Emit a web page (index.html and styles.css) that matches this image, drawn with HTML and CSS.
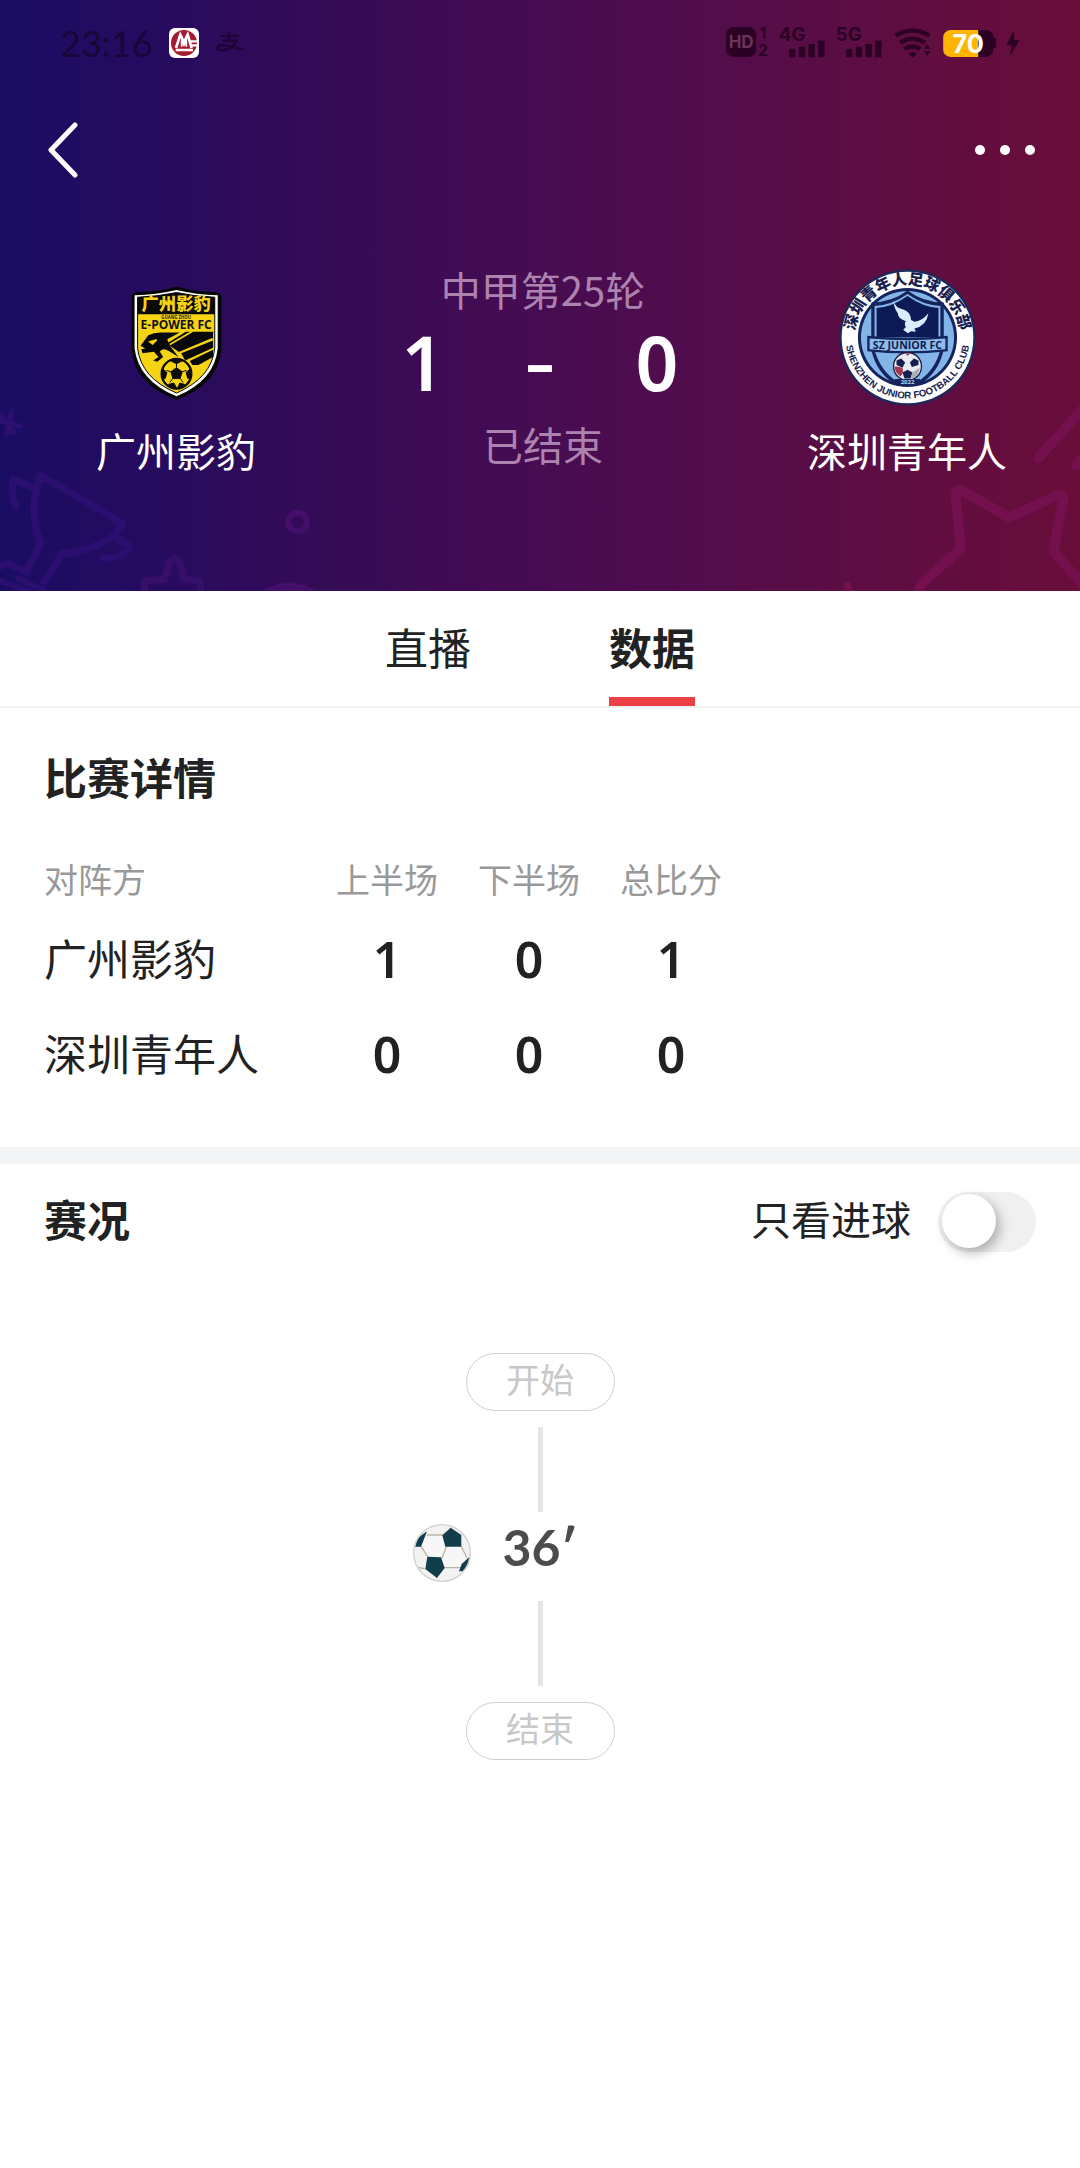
FILE: index.html
```html
<!DOCTYPE html>
<html lang="zh-CN">
<head>
<meta charset="utf-8">
<meta name="viewport" content="width=device-width, initial-scale=1">
<title>广州影豹 1-0 深圳青年人</title>
<link rel="stylesheet" href="styles.css">
</head>
<body>
<header class="hero">
  <svg class="art art-left" viewBox="0 0 1080 603" aria-hidden="true">
    <g fill="none" stroke-width="22" stroke-linejoin="round" stroke-linecap="round">
      <g stroke="#2a0f70">
        <path d="M35 68 L18 135 M-5 92 L60 108 M2 74 L42 128" stroke-width="16"/>
        <path d="M122 256 L368 400 C350 445 270 485 185 492 L133 576 M122 256 C95 330 95 390 122 462 L78 546 L22 520 L-10 532"/>
        <path d="M105 296 L42 268 C32 300 36 325 48 350 M338 436 L388 466 C380 495 350 506 310 504"/>
        <path d="M-5 570 L90 606 M55 566 L130 600" stroke-width="18"/>
      </g>
      <path stroke="#350f6a" d="M432 603 L436 572 L492 568 C508 540 502 508 522 506 C545 506 542 540 552 568 L600 572 L602 603"/>
      <circle stroke="#430f6a" cx="893" cy="396" r="28" stroke-width="18"/>
    </g>
    <path fill="#430f68" d="M785 603 Q870 550 950 603Z"/>
  </svg>
  <svg class="art art-right" viewBox="0 0 900 603" aria-hidden="true">
    <g fill="none" stroke="#75104f" stroke-width="30" stroke-linejoin="round" stroke-linecap="round">
      <path d="M418 600 C420 580 440 568 542 476 L527 310 Q530 296 545 302 L687 382 L835 315 Q852 312 850 325 L820 485 L915 590"/>
      <path d="M776 203 L905 60 M888 226 L915 200"/>
      <path d="M202 586 L212 610" stroke-width="22"/>
    </g>
  </svg>

  <div class="status-bar">
    <div class="status-left">
      <span class="clock">23:16</span>
      <svg class="bank" viewBox="0 0 90 90" aria-hidden="true">
        <rect width="90" height="90" rx="18" fill="#fff"/>
        <circle cx="45" cy="45" r="39" fill="#a51c30"/>
        <path d="M21 60 L34 20 L45 42 L56 20 L68 60" fill="none" stroke="#fff" stroke-width="8"/>
        <path d="M38 56 V40 L45 52 L52 40 V56" fill="none" stroke="#fff" stroke-width="5"/>
        <path d="M20 66 H72 M64 40 H86 M68 52 H84" stroke="#fff" stroke-width="7"/>
      </svg>
      <svg class="pay" viewBox="0 0 90 66" aria-hidden="true">
        <g fill="none" stroke="#1d0538" stroke-width="8">
          <path d="M12 12 H74 M42 0 V26 M20 27 H66 C58 44 40 58 16 58 C0 57 2 42 18 41 C42 40 58 52 86 55"/>
        </g>
      </svg>
    </div>
    <svg class="status-icons" viewBox="75 75 890 105" aria-hidden="true">
      <g fill="#2b0224">
        <rect x="78" y="81" width="90" height="90" rx="22"/>
        <path d="M268 148 h16 v23 h-16z M297 141 h17 v30 h-17z M326 133 h17 v38 h-17z M355 123 h17 v48 h-17z" stroke="#2b0224" stroke-width="2" stroke-linejoin="round"/>
        <path d="M439 148 h16 v23 h-16z M468 141 h17 v30 h-17z M497 133 h17 v38 h-17z M526 123 h17 v48 h-17z" stroke="#2b0224" stroke-width="2" stroke-linejoin="round"/>
        <path d="M624 162 Q637 150 650 162 L637 173Z M681 132 l10 14 h-20z M681 167 l10 -14 h-20z"/>
        <rect x="729" y="90" width="151" height="81" rx="22"/>
        <rect x="876" y="114" width="12" height="30" rx="4"/>
        <path d="M941 92 L918 136 H934 L930 168 L958 120 H942Z"/>
      </g>
      <g fill="none" stroke="#2b0224" stroke-width="13">
        <path d="M586 107 Q637 77 688 107 M600 128 Q637 104 674 128 M613 147 Q637 132 660 147"/>
      </g>
      <path d="M751 90 H834 V171 H751 A22 22 0 0 1 729 149 V112 A22 22 0 0 1 751 90Z" fill="#ffb400"/>
      <g class="glyphs">
        <text x="123" y="144" font-size="51" text-anchor="middle" fill="#6a3558">HD</text>
        <text x="189" y="116" font-size="46" text-anchor="middle" fill="#2b0224">1</text>
        <text x="189" y="167" font-size="46" text-anchor="middle" fill="#2b0224">2</text>
        <text x="276" y="124" font-size="56" text-anchor="middle" fill="#2b0224">4G</text>
        <text x="446" y="124" font-size="56" text-anchor="middle" fill="#2b0224">5G</text>
        <text x="804" y="158" font-size="76" text-anchor="middle" fill="#fff">70</text>
      </g>
    </svg>
  </div>

  <div class="nav-bar">
    <button class="icon-button" type="button" aria-label="返回">
      <svg class="back-icon" viewBox="0 0 32 56"><path d="M28 3 L4 28 L28 53" fill="none" stroke="#fff" stroke-width="5" stroke-linecap="round" stroke-linejoin="round"/></svg>
    </button>
    <button class="icon-button" type="button" aria-label="更多">
      <svg class="more-icon" viewBox="0 0 60 10"><g fill="#fff"><circle cx="5" cy="5" r="5"/><circle cx="30" cy="5" r="5"/><circle cx="55" cy="5" r="5"/></g></svg>
    </button>
  </div>

  <div class="match">
    <div class="team">
      <svg class="crest" viewBox="84 27 412 412" role="img" aria-label="广州影豹队徽">
        <path d="M290 80 Q345 96 400 96 Q425 96 425 110 V270 Q415 375 290 420 Q165 375 155 270 V110 Q155 96 180 96 Q240 96 290 80Z" fill="#060606"/>
        <path d="M290 90 Q350 104 414 106 V265 Q405 362 290 410 Q175 362 164 265 V106 Q230 104 290 90Z" fill="#fff"/>
        <path d="M290 98 Q350 110 405 112 V265 Q396 354 290 400 Q183 354 173 265 V112 Q230 110 290 98Z" fill="#f6d414" stroke="#060606" stroke-width="3"/>
        <path d="M290 98 Q350 110 405 112 V163 H173 V112 Q230 110 290 98Z" fill="#0a0a0a"/>
        <text class="crest-cn" x="289" y="151" font-size="52" text-anchor="middle" fill="#f6d414">广州影豹</text>
        <text class="crest-en" x="289" y="177" font-size="13" text-anchor="middle" fill="#222">GUANG ZHOU</text>
        <text class="crest-en" x="289" y="206" font-size="36" text-anchor="middle" fill="#111">E-POWER FC</text>
        <path d="M182 258 L205 226 Q225 216 250 218 H300 L262 238 L270 258 L296 292 L268 274 Q246 262 240 276 L250 292 L232 306 L220 302 L236 292 L222 276 L188 280 L184 268 L196 266Z" fill="#080808"/>
        <path d="M262 250 L318 216 H401 V218 L276 262Z M276 262 L400 216 V236 L300 278Z M304 280 L400 242 V264 L316 302Z M330 304 L400 270 V292 L356 316 L338 316Z" fill="#080808"/>
        <path d="M210 246 L230 240 L218 252Z M270 254 L338 214 M298 279 L398 237" fill="#f6d414" stroke="#f6d414" stroke-width="5"/>
        <circle cx="290" cy="342" r="48" fill="#0a0a0a"/>
        <circle cx="290" cy="342" r="41" fill="#f6d414"/>
        <g fill="#0a0a0a" stroke="#0a0a0a" stroke-width="3">
          <path d="M290 324 L307 336 L301 356 H279 L273 336Z"/>
          <path d="M274 304 L290 312 L306 304 L300 299 H280Z M249 328 L261 338 L256 356 L249 354Z M331 328 L319 338 L324 356 L331 354Z M266 374 L282 370 L290 384 L276 382Z M314 374 L300 370 L294 384 L306 382Z"/>
          <path d="M290 324 V310 M307 336 L320 332 M301 356 L310 368 M279 356 L270 368 M273 336 L260 332" fill="none" stroke-width="3"/>
        </g>
      </svg>
      <span class="team-name">广州影豹</span>
    </div>

    <div class="result">
      <p class="round">中甲第25轮</p>
      <p class="score"><span>1</span><span class="dash">–</span><span>0</span></p>
      <p class="state">已结束</p>
    </div>

    <div class="team">
      <svg class="crest" viewBox="151 57 412 412" role="img" aria-label="深圳青年人队徽">
        <defs>
          <path id="ring-top" d="M198 263 A159 159 0 0 1 516 263"/>
          <path id="ring-bottom" d="M171 240 A187 187 0 1 0 543 240"/>
        </defs>
        <circle cx="357" cy="263" r="205" fill="#1d2758"/>
        <circle cx="357" cy="263" r="198" fill="#fff"/>
        <circle cx="357" cy="263" r="149" fill="#14245c"/>
        <circle cx="357" cy="263" r="140" fill="#84b5e8"/>
        <text class="crest-cn" font-size="46" fill="#17204f"><textPath href="#ring-top" startOffset="50%" text-anchor="middle">深圳青年人足球俱乐部</textPath></text>
        <text class="crest-ring" font-size="29" fill="#17204f"><textPath href="#ring-bottom" startOffset="50%" text-anchor="middle">SHENZHEN JUNIOR FOOTBALL CLUB</textPath></text>
        <path d="M357 122 Q405 158 466 158 V300 Q450 370 394 404 H320 Q264 370 248 300 V158 Q309 158 357 122Z" fill="#14245c"/>
        <path d="M357 132 Q405 166 456 168 V300 Q440 362 388 396 H326 Q274 362 258 300 V168 Q309 166 357 132Z" fill="#84b5e8"/>
        <path d="M357 138 Q405 172 450 174 V262 H264 V174 Q309 172 357 138Z" fill="#0c1a56"/>
        <path d="M314 152 Q322 176 342 178 Q366 184 368 210 L378 216 Q400 214 420 190 Q414 228 378 236 L382 246 L368 244 L358 250 L344 240 L352 232 Q346 222 352 214 Q326 204 328 190 Q318 180 314 152Z" fill="#d8ecfb"/>
        <path d="M236 258 Q357 270 478 258 V304 Q357 318 236 304Z" fill="#14245c"/>
        <path d="M243 266 Q357 277 471 266 V298 Q357 310 243 298Z" fill="#8dbcec"/>
        <text class="crest-en" x="357" y="298" font-size="32" text-anchor="middle" fill="#101c50">SZ JUNIOR FC</text>
        <circle cx="357" cy="350" r="44" fill="#1a1a40"/>
        <circle cx="357" cy="350" r="40" fill="#e9eaf0"/>
        <g fill="#15204f">
          <path d="M338 326 L350 338 L342 354 L324 346 L324 332Z M376 326 L364 338 L370 352 L390 346 L390 332Z M357 360 L372 368 L366 386 H348 L342 368Z"/>
        </g>
        <path d="M350 311 H366 L357 318Z M324 350 L342 354 L344 368 L336 380 Q318 368 318 350Z" fill="#a33a52"/>
        <path d="M372 368 L394 354 Q392 374 376 384 L366 386Z" fill="#a9adb8"/>
        <path d="M318 388 H396 L388 408 H326Z" fill="#14245c"/>
        <text class="crest-en" x="357" y="403" font-size="18" text-anchor="middle" fill="#b9d8f5">2022</text>
      </svg>
      <span class="team-name">深圳青年人</span>
    </div>
  </div>
</header>

<nav class="tabs" role="tablist">
  <button class="tab" type="button" role="tab" aria-selected="false">直播</button>
  <button class="tab active" type="button" role="tab" aria-selected="true">数据</button>
</nav>

<main>
  <section class="details">
    <h2 class="title">比赛详情</h2>
    <table class="scores">
      <thead>
        <tr><th scope="col" class="side">对阵方</th><th scope="col">上半场</th><th scope="col">下半场</th><th scope="col">总比分</th></tr>
      </thead>
      <tbody>
        <tr><th scope="row" class="side">广州影豹</th><td>1</td><td>0</td><td>1</td></tr>
        <tr><th scope="row" class="side">深圳青年人</th><td>0</td><td>0</td><td>0</td></tr>
      </tbody>
    </table>
  </section>

  <section class="events">
    <div class="events-head">
      <h2 class="title">赛况</h2>
      <label class="filter" for="goals-only">只看进球 <input class="switch" type="checkbox" role="switch" id="goals-only"></label>
    </div>
    <div class="timeline">
      <span class="pill">开始</span>
      <span class="line"></span>
      <div class="event">
        <svg class="ball" viewBox="0 0 174 174" role="img" aria-label="进球">
          <defs><clipPath id="ball-clip"><circle cx="87" cy="87" r="83"/></clipPath></defs>
          <circle cx="87" cy="87" r="85" fill="#f2f2f2" stroke="#d0d0d0" stroke-width="4"/>
          <g clip-path="url(#ball-clip)">
            <path d="M42 33 H90 L101 65 L87 97 H48 L24 67Z M101 65 L145 68 L162 100 L140 131 H93 L87 97Z" fill="#f7f7f7"/>
            <path d="M42 33 H90 M24 67 L45 99 M101 65 L87 102 M145 68 L162 102 M93 131 H144 M35 134 L14 130" fill="none" stroke="#b9b6a4" stroke-width="4"/>
            <g fill="#123d4b">
              <path d="M113 11 L145 33 V68 H97 L88 34Z"/>
              <path d="M43 98 L84 100 L95 132 L72 162 L37 135Z"/>
              <path d="M42 22 L24 68 H6 L14 42Z M170 98 L146 120 L138 142 L150 142 L168 122Z"/>
            </g>
          </g>
        </svg>
        <span class="minute">36′</span>
      </div>
      <span class="line"></span>
      <span class="pill">结束</span>
    </div>
  </section>
</main>
</body>
</html>
```
FILE: styles.css
```css
* {
  box-sizing: border-box;
}

body {
  margin: 0;
  min-height: 100vh;
  background: #fff;
  color: #222;
  font-family: "Noto Sans CJK SC", sans-serif;
}

h2,
p {
  margin: 0;
}

button {
  padding: 0;
  border: 0;
  background: none;
  color: inherit;
  font: inherit;
}

svg {
  display: block;
}

/* Match header */
.hero {
  position: relative;
  overflow: hidden;
  padding-bottom: 117px;
  background: linear-gradient(90deg, #190d63 0%, #260b5f 14%, #330b57 28%, #470c52 50%, #540d4a 68%, #5f0d41 84%, #690d39 100%);
  color: #fff;
}

.art {
  position: absolute;
  bottom: 0;
  height: 201px;
}

.art-left {
  left: 0;
  width: 360px;
}

.art-right {
  right: 0;
  width: 300px;
}

.status-bar {
  position: relative;
  display: flex;
  align-items: center;
  justify-content: space-between;
  height: 85px;
  padding: 0 58px 0 60px;
}

.status-left {
  display: flex;
  align-items: center;
}

.clock {
  margin-right: 16px;
  color: #190538;
  font: 36px/40px Lato, sans-serif;
}

.bank {
  width: 30px;
  height: 30px;
  margin-right: 17px;
}

.pay {
  width: 28px;
  height: 21px;
}

.status-icons {
  overflow: visible;
  width: 297px;
  height: 35px;
}

.glyphs {
  font-family: Inter, sans-serif;
  font-weight: 700;
}

.nav-bar {
  position: relative;
  display: flex;
  align-items: center;
  justify-content: space-between;
  height: 130px;
  padding: 0 45px 0 47px;
}

.back-icon {
  width: 32px;
  height: 56px;
}

.more-icon {
  width: 60px;
  height: 10px;
}

.match {
  position: relative;
  display: grid;
  grid-template-columns: 352fr 382fr 346fr;
  padding-top: 54px;
}

.team {
  display: flex;
  flex-direction: column;
  align-items: center;
}

.crest {
  width: 137px;
  height: 137px;
}

.crest-cn {
  font-family: "Noto Sans CJK SC", sans-serif;
  font-weight: 900;
}

.crest-en {
  font-family: "Open Sans", sans-serif;
  font-weight: 700;
}

.crest-ring {
  font-family: "Liberation Sans", sans-serif;
  font-weight: 700;
}

.team-name {
  margin-top: 20px;
  font-size: 40px;
  line-height: 48px;
}

.result {
  display: flex;
  flex-direction: column;
  align-items: center;
}

.round,
.state {
  color: #ac83ae;
  font-size: 40px;
  line-height: 40px;
}

.score {
  display: grid;
  grid-template-columns: repeat(3, 117px);
  margin: 4px 6px 13px 0;
  font: 600 75px/98px "Noto Sans", sans-serif;
  text-align: center;
}

.dash {
  font-size: 56px;
  font-weight: 800;
}

/* Tabs */
.tabs {
  display: flex;
  justify-content: center;
  gap: 138px;
  border-bottom: 2px solid #f2f2f2;
}

.tab {
  height: 115px;
  padding-top: 4px;
  border-bottom: 9px solid transparent;
  font-size: 43px;
  line-height: 60px;
}

.tab.active {
  border-color: #eb4144;
  font-weight: 700;
}

/* Sections */
.title {
  font-size: 43px;
  font-weight: 700;
  line-height: 60px;
}

.details {
  padding: 38px 44px 48px;
  border-bottom: 17px solid #f2f4f6;
}

.scores {
  margin-top: 47px;
  border-collapse: collapse;
  table-layout: fixed;
  width: 698px;
}

.scores th,
.scores td {
  width: 142px;
  padding: 0;
  text-align: center;
}

.scores thead th {
  height: 56px;
  color: #999;
  font-size: 34px;
  font-weight: 400;
  line-height: 52px;
  vertical-align: top;
}

.scores td {
  height: 95px;
  padding-top: 4px;
  font: 600 50px/60px "Noto Sans", sans-serif;
}

.scores .side {
  width: 272px;
  text-align: left;
}

.scores tbody .side {
  font-size: 43px;
  font-weight: 400;
  line-height: 60px;
}

.events {
  padding: 28px 44px 60px;
}

.events-head {
  display: flex;
  align-items: flex-start;
  justify-content: space-between;
}

.events-head .title,
.filter {
  line-height: 52px;
}

.filter {
  display: flex;
  align-items: flex-start;
  gap: 27px;
  font-size: 40px;
}

.switch {
  appearance: none;
  width: 98px;
  height: 60px;
  margin: 0;
  padding: 2px 4px;
  border-radius: 30px;
  background: #f0f0f0;
}

.switch::before {
  content: "";
  display: block;
  width: 54px;
  height: 54px;
  border-radius: 50%;
  background: #fff;
  box-shadow: 4px 5px 12px rgba(0, 0, 0, 0.28);
}

.switch:checked {
  background: #eb4144;
}

.switch:checked::before {
  margin-left: auto;
}

/* Timeline */
.timeline {
  display: flex;
  flex-direction: column;
  align-items: center;
  margin-top: 101px;
}

.pill {
  width: 149px;
  height: 58px;
  border: 1px solid #d0d0d0;
  border-radius: 29px;
  color: #c8c8c8;
  font-size: 34px;
  line-height: 50px;
  text-align: center;
}

.line {
  width: 5px;
  height: 85px;
  background: #e6e6e6;
}

.pill + .line {
  margin-top: 16px;
}

.line + .pill {
  margin-top: 16px;
}

.event {
  display: grid;
  grid-template-columns: 1fr auto 1fr;
  align-items: center;
  width: 100%;
  height: 81px;
  margin-bottom: 8px;
}

.ball {
  justify-self: end;
  width: 58px;
  height: 58px;
  margin-right: 32px;
}

.minute {
  padding-bottom: 12px;
  color: #4c4c4c;
  font: 700 50px/60px Lato, sans-serif;
}
```
